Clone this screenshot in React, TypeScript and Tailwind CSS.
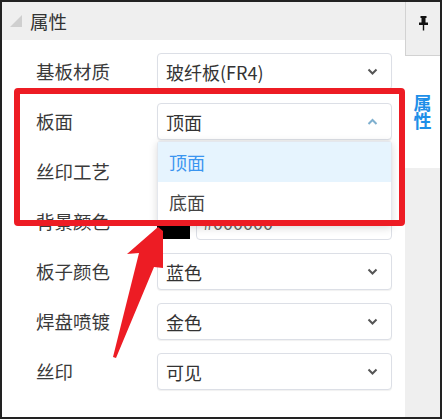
import React from "react";

const FONT = { fontFamily: '"Noto Sans CJK SC", "Noto Sans", sans-serif' };

function Chevron({ up = false, color = "#555" }: { up?: boolean; color?: string }) {
  return (
    <svg width="11" height="7" viewBox="0 0 11 7" className="shrink-0">
      <path
        d={up ? "M1.5 6 L5.5 2 L9.5 6" : "M1.5 1.5 L5.5 5.5 L9.5 1.5"}
        fill="none"
        stroke={color}
        strokeWidth="2"
      />
    </svg>
  );
}

function Select({ value, open = false }: { value: string; open?: boolean }) {
  return (
    <div className="w-[235px] h-[37px] border border-[#dcdfe6] rounded-[4px] bg-white flex items-center justify-between pl-[8px] pr-[13px] shadow-[0_1px_1px_rgba(0,0,0,0.06)]">
      <span className="text-[18px] text-[#333] leading-none">{value}</span>
      <Chevron up={open} color={open ? "#7fb0cf" : "#555"} />
    </div>
  );
}

function Row({ label, children }: { label: string; children: React.ReactNode }) {
  return (
    <div className="flex items-center h-[37px]">
      <div className="w-[121px] text-[18.5px] text-[#3a3a3a] leading-none">{label}</div>
      {children}
    </div>
  );
}

export default function App() {
  return (
    <div className="relative w-[443px] h-[420px] bg-white" style={FONT}>
      <div className="w-[442px] h-[419px] border-2 border-[#222] flex">
        {/* left panel */}
        <div className="w-[403px] h-full flex flex-col bg-white">
          <div className="h-[38px] bg-[#efefef] flex items-center pl-[8px] gap-[8px]">
            <svg width="12" height="12" viewBox="0 0 12 12">
              <polygon points="0,12 12,0 12,12" fill="#cfcfcf" />
            </svg>
            <span className="text-[18.5px] text-[#333] leading-none">属性</span>
          </div>
          <div className="flex flex-col gap-[13px] pt-[13px] pl-[34px]">
            <Row label="基板材质">
              <Select value="玻纤板(FR4)" />
            </Row>
            <Row label="板面">
              <Select value="顶面" open />
            </Row>
            <Row label="丝印工艺">
              <Select value="" />
            </Row>
            <Row label="背景颜色">
              <div className="flex items-end gap-[6px] h-[37px]">
                <div className="w-[33px] h-[26px] bg-black mb-[1px]" />
                <div className="w-[196px] h-[37px] border border-[#dcdfe6] rounded-[4px] flex items-center pl-[6px] text-[18px] text-[#666] leading-none">
                  #000000
                </div>
              </div>
            </Row>
            <Row label="板子颜色">
              <Select value="蓝色" />
            </Row>
            <Row label="焊盘喷镀">
              <Select value="金色" />
            </Row>
            <Row label="丝印">
              <Select value="可见" />
            </Row>
          </div>
        </div>
        {/* right strip */}
        <div className="w-[35px] h-full flex flex-col">
          <div className="h-[54px] bg-[#efefef] border-l border-b border-[#d2d2d2] flex justify-center pt-[14px]">
            <svg width="9" height="15" viewBox="0 0 9 15">
              <rect x="1.5" y="0" width="6" height="2" fill="#111" />
              <rect x="2.5" y="1" width="4" height="6" fill="#111" />
              <rect x="0" y="6.5" width="9" height="2.5" fill="#111" />
              <rect x="3.8" y="8.5" width="1.4" height="6" fill="#111" />
            </svg>
          </div>
          <div className="h-[112px] bg-white flex justify-center pt-[38px]">
            <span className="[writing-mode:vertical-rl] text-[18px] leading-[18px] font-bold text-[#1e8fe8]">
              属性
            </span>
          </div>
          <div className="flex-1 bg-[#efefef]" />
        </div>
      </div>

      {/* open dropdown */}
      <div className="absolute left-[157px] top-[141px] w-[235px] h-[85px] bg-white border border-[#e4e7ed] rounded-[3px] shadow-[0_2px_8px_rgba(0,0,0,0.15)]">
        <div className="h-[40px] bg-[#e6f4fe] flex items-center pl-[11px] text-[18px] text-[#3a95f0] leading-none">
          顶面
        </div>
        <div className="h-[40px] flex items-center pl-[11px] text-[18px] text-[#444] leading-none">
          底面
        </div>
      </div>

      {/* red annotation box */}
      <div className="absolute left-[14px] top-[88px] w-[391px] h-[138px] border-[6px] border-[#ed1c24] rounded-[4px]" />

      {/* red arrow */}
      <svg className="absolute left-0 top-0 pointer-events-none" width="443" height="420" viewBox="0 0 443 420">
        <polygon
          points="158,227 163,231 163,268 154,267 116,358 113,357 139,253 127,254"
          fill="#ed1c24"
        />
      </svg>
    </div>
  );
}
